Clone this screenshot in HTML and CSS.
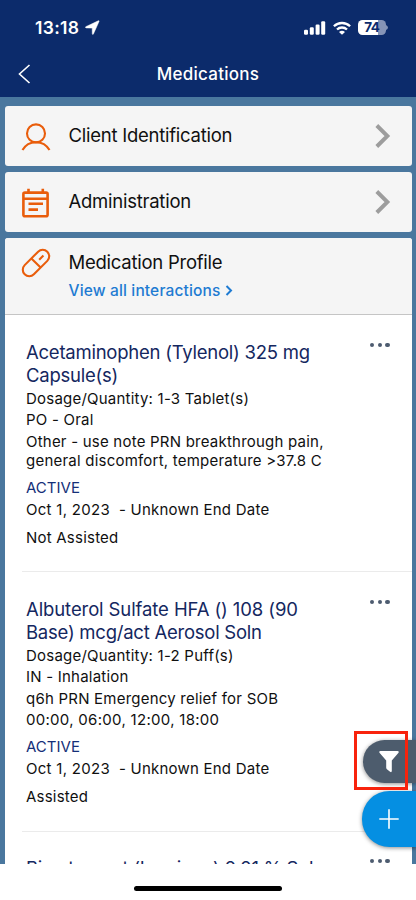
FILE: index.html
```
<!DOCTYPE html>
<html lang="en">
<head>
<meta charset="utf-8">
<title>Medications</title>
<link rel="stylesheet" href="styles.css">
</head>
<body>
<div class="phone">
  <header class="header">
    <div class="status">
      <span class="time">13:18</span>
      <svg class="location" width="15" height="15" viewBox="0 0 15 15"><path d="M.8 6.7 13.3.8q1.1-.4.7.7L8.4 14q-.8 1.1-1.1-.2l-.1-5.7-5.9-.2Q-.4 7.5.8 6.7z" fill="#fff" stroke="#fff" stroke-width=".5"/></svg>
      <svg class="signal" width="22" height="14" viewBox="0 0 22 14" fill="#fff"><rect x="0" y="8.7" width="4" height="5" rx="1.2"/><rect x="5.8" y="6.3" width="4" height="7.4" rx="1.2"/><rect x="11.6" y="3.6" width="4" height="10.1" rx="1.2"/><rect x="17.2" y=".3" width="4" height="13.4" rx="1.2"/></svg>
      <svg class="wifi" width="18" height="14" viewBox="0 0 18 14"><g fill="none" stroke="#fff" stroke-width="2.3"><path d="M.9 5.3a11.6 11.6 0 0 1 16.2 0"/><path d="M4 8.5a7.2 7.2 0 0 1 10 0"/></g><path d="M9 13.8 6 10.900q3-2.300 6 0z" fill="#fff"/></svg>
      <span class="battery"><span class="level">74</span></span>
      <svg class="battery-tip" width="2" height="5" viewBox="0 0 2 5"><path d="M0 0q2 1 2 2.500T0 5z" fill="#8694b7"/></svg>
    </div>
    <div class="navbar">
      <svg class="back" width="14" height="20" viewBox="0 0 14 20"><path d="M12.500 1 2.500 10l10 9" fill="none" stroke="#fff" stroke-width="1.600"/></svg>
      <h1>Medications</h1>
    </div>
  </header>

  <main class="content">
    <section class="card row">
      <svg class="icon" width="30" height="30" viewBox="0 0 30 30" fill="none" stroke="#e95d0b" stroke-width="2.100"><circle cx="15" cy="11.400" r="9"/><path d="M1.500 28Q6 20.200 15 20.200T28.500 28"/></svg>
      <h2>Client Identification</h2>
      <svg class="chevron" width="16" height="24" viewBox="0 0 16 24"><path d="M1.800 1.500 12.400 12 1.800 22.500" fill="none" stroke="#9d9d9d" stroke-width="3.900"/></svg>
    </section>
    <section class="card row">
      <svg class="icon" width="30" height="30" viewBox="0 0 30 30" fill="none" stroke="#e95d0b" stroke-width="2.600"><rect x="2.400" y="4.600" width="24.200" height="23.600" rx="1.500"/><path d="M2.700 10.700h24.200M7.500.8v4M21.800.8v4M7.500 15.800h14.500M7.500 21.600h9.500"/></svg>
      <h2>Administration</h2>
      <svg class="chevron" width="16" height="24" viewBox="0 0 16 24"><path d="M1.800 1.500 12.400 12 1.800 22.500" fill="none" stroke="#9d9d9d" stroke-width="3.900"/></svg>
    </section>

    <section class="card profile">
      <div class="profile-head">
        <svg class="icon" width="30" height="30" viewBox="0 0 30 30" fill="none" stroke="#e95d0b" stroke-width="2.100"><g transform="rotate(-45 15 15)"><rect x="-1" y="8.500" width="32" height="13" rx="6.500"/><path d="M15 8.500v13M19.500 15h6"/></g></svg>
        <div>
          <h2>Medication Profile</h2>
          <div class="interactions">View all interactions<svg width="8" height="11" viewBox="0 0 8 11"><path d="m1.500 1 4.500 4.500L1.500 10" fill="none" stroke="#1e7bd2" stroke-width="2"/></svg></div>
        </div>
      </div>

      <article class="med">
        <h3>Acetaminophen (Tylenol) 325 mg<br>Capsule(s)</h3>
        <p>Dosage/Quantity: 1-3 Tablet(s)</p>
        <p>PO - Oral</p>
        <p>Other - use note PRN breakthrough pain,<br>general discomfort, temperature &gt;37.8 C</p>
        <p class="state">ACTIVE</p>
        <p class="dates"><span class="num">Oct 1, 2023</span><span>- Unknown End Date</span></p>
        <p class="assist">Not Assisted</p>
        <div class="more"><i></i><i></i><i></i></div>
      </article>

      <article class="med">
        <h3><span class="wide">Albuterol Sulfate HFA () 108 (90</span><br>Base) mcg/act Aerosol Soln</h3>
        <p>Dosage/Quantity: 1-2 Puff(s)</p>
        <p>IN - Inhalation</p>
        <p>q6h PRN Emergency relief for SOB</p>
        <p class="num">00:00, 06:00, 12:00, 18:00</p>
        <p class="state">ACTIVE</p>
        <p class="dates"><span class="num">Oct 1, 2023</span><span>- Unknown End Date</span></p>
        <p class="assist">Assisted</p>
        <div class="more"><i></i><i></i><i></i></div>
      </article>

      <article class="med">
        <h3>Bimatoprost (Lumigan) 0.01 % Sol</h3>
        <div class="more"><i></i><i></i><i></i></div>
      </article>
    </section>
  </main>

  <div class="filter"><svg width="20" height="22" viewBox="0 0 20 22"><path d="M1.500 0h17q2 .3.800 2L12.800 9.500V20q-.2 1.800-1.700.8l-3.200-2.600q-.7-.6-.7-1.500V9.500L.7 2Q-.5.300 1.500 0z" fill="#fff"/></svg></div>
  <div class="add"><svg width="20" height="20" viewBox="0 0 20 20"><path d="M10 .3v19.400M.3 10h19.400" stroke="#fff" stroke-width="1.600"/></svg></div>
  <div class="highlight"></div>

  <footer class="home"><div class="bar"></div></footer>
</div>
</body>
</html>
```
FILE: styles.css
```
* { box-sizing: border-box; }
body { margin: 0; font-family: Inter, "Liberation Sans", sans-serif; color: #101010; background: #fff; }
h1, h2, h3, p { margin: 0; font-weight: 400; }
svg { display: block; flex: none; }

.phone { position: relative; width: 416px; height: 900px; overflow: hidden; display: flex; flex-direction: column; background: #fff; }

.header { height: 97px; flex: none; background: #0c2b6b; color: #fff; }
.status { display: flex; align-items: center; height: 55px; padding: 0 28px 0 35px; }
.time { font-size: 17.5px; font-weight: 600; letter-spacing: .3px; width: 50px; }
.signal { margin-left: auto; margin-right: 7px; }
.wifi { margin-right: 7px; }
.battery { width: 27.500px; height: 15px; border-radius: 4.5px; overflow: hidden; background: linear-gradient(90deg, #fff 20.500px, #8694b7 20.500px); }
.level { display: block; color: #0c2b6b; font-size: 13.5px; font-weight: 700; line-height: 15px; text-align: center; letter-spacing: -.5px; }
.battery-tip { margin-left: .500px; }
.navbar { display: flex; align-items: center; height: 38px; padding: 0 31px 0 17px; }
.navbar h1 { flex: 1; text-align: center; font-size: 17px; font-weight: 550; letter-spacing: .25px; }

.content { height: 767px; flex: none; overflow: hidden; background: #4a779e; padding: 9px 4.5px 0; display: flex; flex-direction: column; gap: 6.5px; }
.card { flex: none; background: #f5f5f5; border-radius: 3px; }
.row { display: flex; align-items: center; height: 59.5px; padding: 0 20.5px 0 16.5px; }
h2 { font-size: 18.5px; letter-spacing: -.25px; line-height: 24px; }
.row h2 { margin-left: 17.5px; margin-top: -1px; flex: 1; }
.row .icon { margin-top: 3px; }
.profile { overflow: hidden; background: #fff; }
.profile-head { display: flex; gap: 17.5px; height: 77px; padding: 11.5px 16.5px 0; background: #f5f5f5; border-bottom: 1.5px solid #c5c5c5; }
.profile-head .icon { margin-top: -2px; }
.interactions { display: flex; align-items: center; gap: 5px; margin-top: 6px; color: #1e7bd2; font-size: 15.5px; font-weight: 550; letter-spacing: .15px; line-height: 22px; }

.med { position: relative; height: 257px; padding: 25.5px 0 0 21.5px; }
.med + .med { height: 259.5px; }
.med::after { content: ""; position: absolute; left: 17px; right: 0; bottom: 0; height: 1px; background: #ebebeb; }
h3 { color: #142760; font-size: 18.5px; line-height: 23px; letter-spacing: -.24px; margin-bottom: 2px; }
.wide { letter-spacing: -.1px; }
.med p { font-size: 15px; line-height: 19.5px; margin-bottom: 2px; letter-spacing: .22px; }
.med p.num, .med .num { letter-spacing: .29px; }
.med .state { color: #142f78; letter-spacing: .02px; margin-top: 7.5px; }
.dates { display: flex; gap: 9px; }
.med .assist { margin-top: 8.5px; }
.more { position: absolute; top: 27.5px; right: 22px; display: flex; gap: 3.3px; }
.more i { width: 4.3px; height: 4.3px; border-radius: 50%; background: #4d5c70; }

.filter, .add { position: absolute; right: 0; display: flex; align-items: center; justify-content: center; box-shadow: 0 1px 4px rgba(0,0,0,.45); }
.filter { top: 740px; width: 53.5px; height: 43px; background: #4d5c6d; border-radius: 21.5px 0 0 21.5px; }
.add { top: 791px; width: 54px; height: 55.5px; background: #058fe2; border-radius: 27.5px 0 0 27.5px; }
.highlight { position: absolute; left: 353.5px; top: 731px; width: 54px; height: 58.5px; border: 3.5px solid #f8230d; }

.home { flex: 1; display: flex; justify-content: center; padding-top: 22px; }
.bar { width: 148px; height: 5px; border-radius: 3px; background: #000; }
```
